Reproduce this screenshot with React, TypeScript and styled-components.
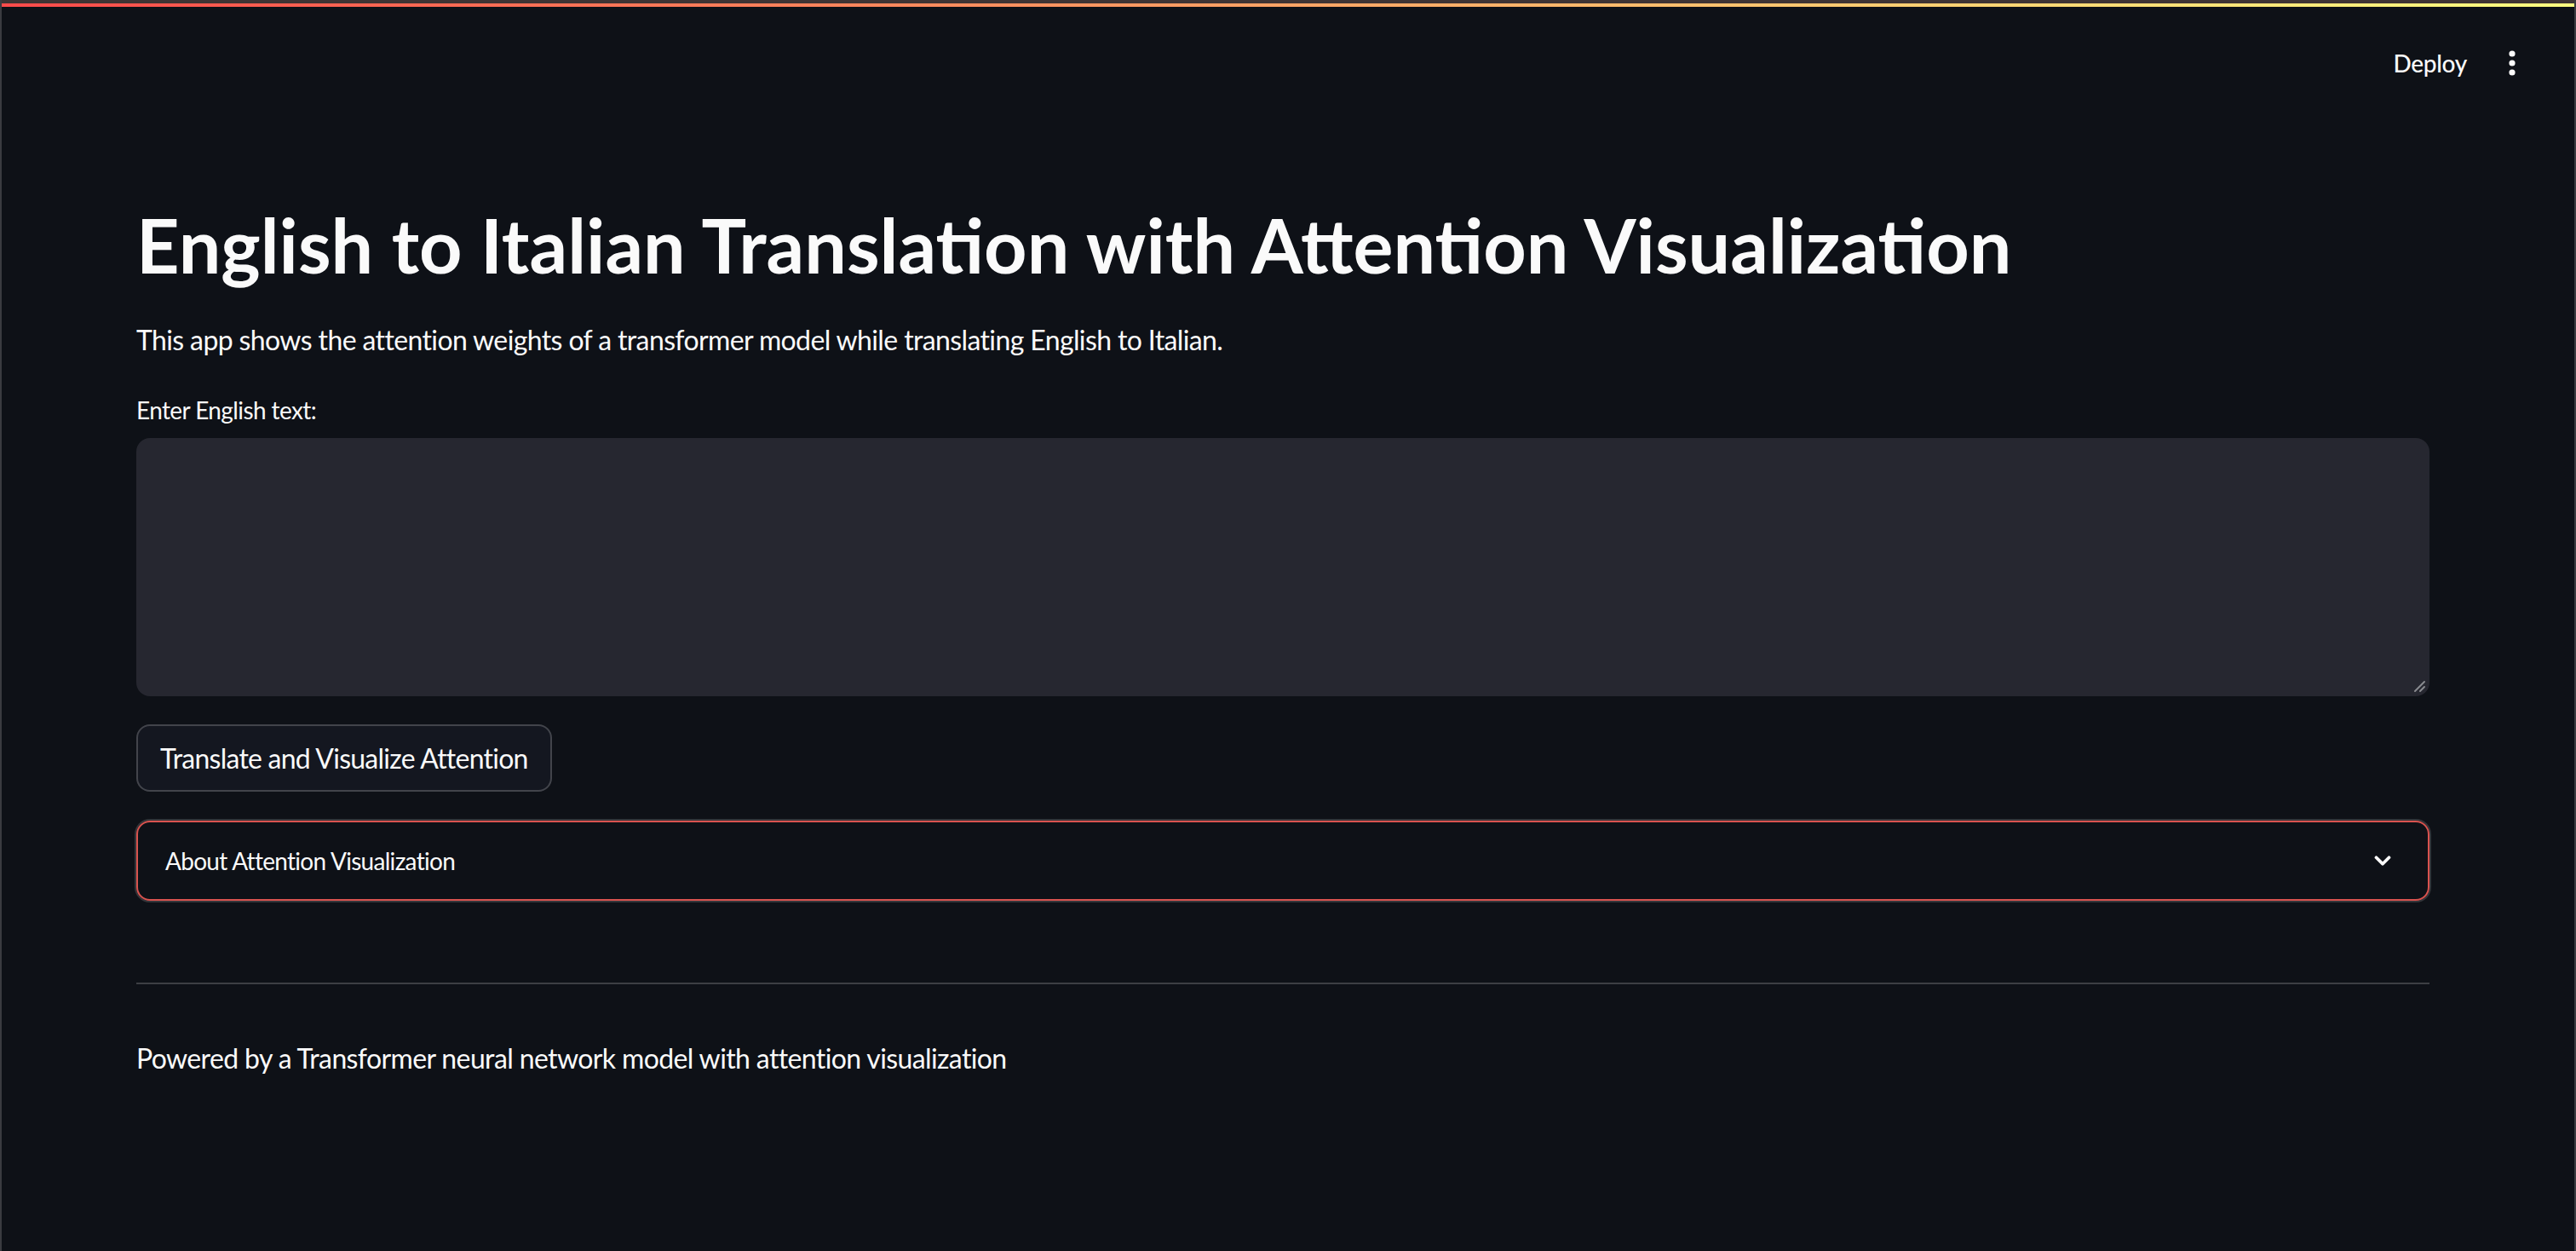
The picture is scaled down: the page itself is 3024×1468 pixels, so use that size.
import React from "react";
import styled, { createGlobalStyle } from "styled-components";
import { ChevronDown } from "lucide-react";

const GlobalStyle = createGlobalStyle`
  html, body {
    margin: 0;
    padding: 0;
    background: #0e1117;
  }
  body {
    font-family: Lato, "Noto Sans", sans-serif;
    color: #fafafa;
  }
  * { box-sizing: border-box; }
`;

const Frame = styled.div`
  min-height: 1468px;
  display: flex;
  flex-direction: column;
  border-left: 2px solid #3a3b40;
  border-right: 2px solid #3a3b40;
  background: #0e1117;
`;

const TopEdge = styled.div`
  height: 4px;
  background: #3f3434;
`;

const Decoration = styled.div`
  height: 4px;
  background: linear-gradient(90deg, #ff4b4b, #fffd80);
`;

const Header = styled.header`
  height: 120px;
  display: flex;
  justify-content: flex-end;
  align-items: flex-start;
  padding: 46px 68px 0 0;
  gap: 48px;
`;

const DeployLabel = styled.span`
  font-size: 28px;
  line-height: 40px;
  font-weight: 500;
  letter-spacing: -0.3px;
  color: #fafafa;
`;

const MenuButton = styled.span`
  display: flex;
  align-items: center;
  height: 40px;
`;

const Main = styled.main`
  display: flex;
  flex-direction: column;
  padding: 109px 170px 0 158px;
`;

const Title = styled.h1`
  margin: 0;
  font-size: 88px;
  line-height: 100.8px;
  font-weight: 700;
  color: #fafafa;
`;

const Paragraph = styled.p<{ $top: number }>`
  margin: ${(p) => p.$top}px 0 0;
  font-size: 32px;
  line-height: 48px;
  letter-spacing: -0.62px;
  color: #fafafa;
`;

const Label = styled.label`
  margin-top: 38px;
  font-size: 28px;
  line-height: 40px;
  letter-spacing: -0.6px;
  color: #fafafa;
`;

const InputWrap = styled.div`
  position: relative;
  margin-top: 13px;
  height: 303px;
`;

const TextArea = styled.textarea`
  display: block;
  height: 100%;
  width: 100%;
  background: #262730;
  border: none;
  border-radius: 16px;
  resize: none;
  color: #fafafa;
  font-family: inherit;
  font-size: 32px;
  padding: 16px 24px;
  outline: none;
`;

const ResizeGrip = styled.svg`
  position: absolute;
  right: 4px;
  bottom: 4px;
  pointer-events: none;
`;

const Button = styled.button`
  margin-top: 33px;
  align-self: flex-start;
  height: 79px;
  padding: 0 26px;
  background: #141720;
  border: 2px solid rgba(250, 250, 250, 0.2);
  border-radius: 16px;
  color: #fafafa;
  font-family: inherit;
  font-size: 32px;
  letter-spacing: -0.75px;
  cursor: pointer;
`;

const Expander = styled.details`
  margin-top: 34px;
  border: 2px solid #d9534f;
  border-radius: 16px;
  box-shadow: 0 0 0 2px #34353a;
`;

const Summary = styled.summary`
  list-style: none;
  height: 90px;
  display: flex;
  align-items: center;
  justify-content: space-between;
  padding: 0 38px 0 32px;
  font-size: 28px;
  letter-spacing: -0.7px;
  color: #fafafa;
  cursor: pointer;
  &::-webkit-details-marker { display: none; }
`;

const Rule = styled.hr`
  margin: 96px 0 0;
  border: none;
  height: 2px;
  background: rgba(250, 250, 250, 0.2);
`;

export default function App() {
  return (
    <>
      <GlobalStyle />
      <Frame>
        <TopEdge />
        <Decoration />
        <Header>
          <DeployLabel>Deploy</DeployLabel>
          <MenuButton>
            <svg width="10" height="30" viewBox="0 0 10 30">
              <circle cx="5" cy="4" r="3.6" fill="#fafafa" />
              <circle cx="5" cy="15" r="3.6" fill="#fafafa" />
              <circle cx="5" cy="26" r="3.6" fill="#fafafa" />
            </svg>
          </MenuButton>
        </Header>
        <Main>
          <Title>English to Italian Translation with Attention Visualization</Title>
          <Paragraph $top={37}>
            This app shows the attention weights of a transformer model while translating English to Italian.
          </Paragraph>
          <Label htmlFor="src">Enter English text:</Label>
          <InputWrap>
            <TextArea id="src" />
            <ResizeGrip width="16" height="16" viewBox="0 0 16 16">
              <line x1="14" y1="3" x2="3" y2="14" stroke="#8a8b90" strokeWidth="2" strokeLinecap="round" />
              <line x1="14" y1="9" x2="9" y2="14" stroke="#8a8b90" strokeWidth="2" strokeLinecap="round" />
            </ResizeGrip>
          </InputWrap>
          <Button>Translate and Visualize Attention</Button>
          <Expander>
            <Summary>
              <span>About Attention Visualization</span>
              <ChevronDown size={30} strokeWidth={3} color="#fafafa" />
            </Summary>
          </Expander>
          <Rule />
          <Paragraph $top={63}>
            Powered by a Transformer neural network model with attention visualization
          </Paragraph>
        </Main>
      </Frame>
    </>
  );
}
